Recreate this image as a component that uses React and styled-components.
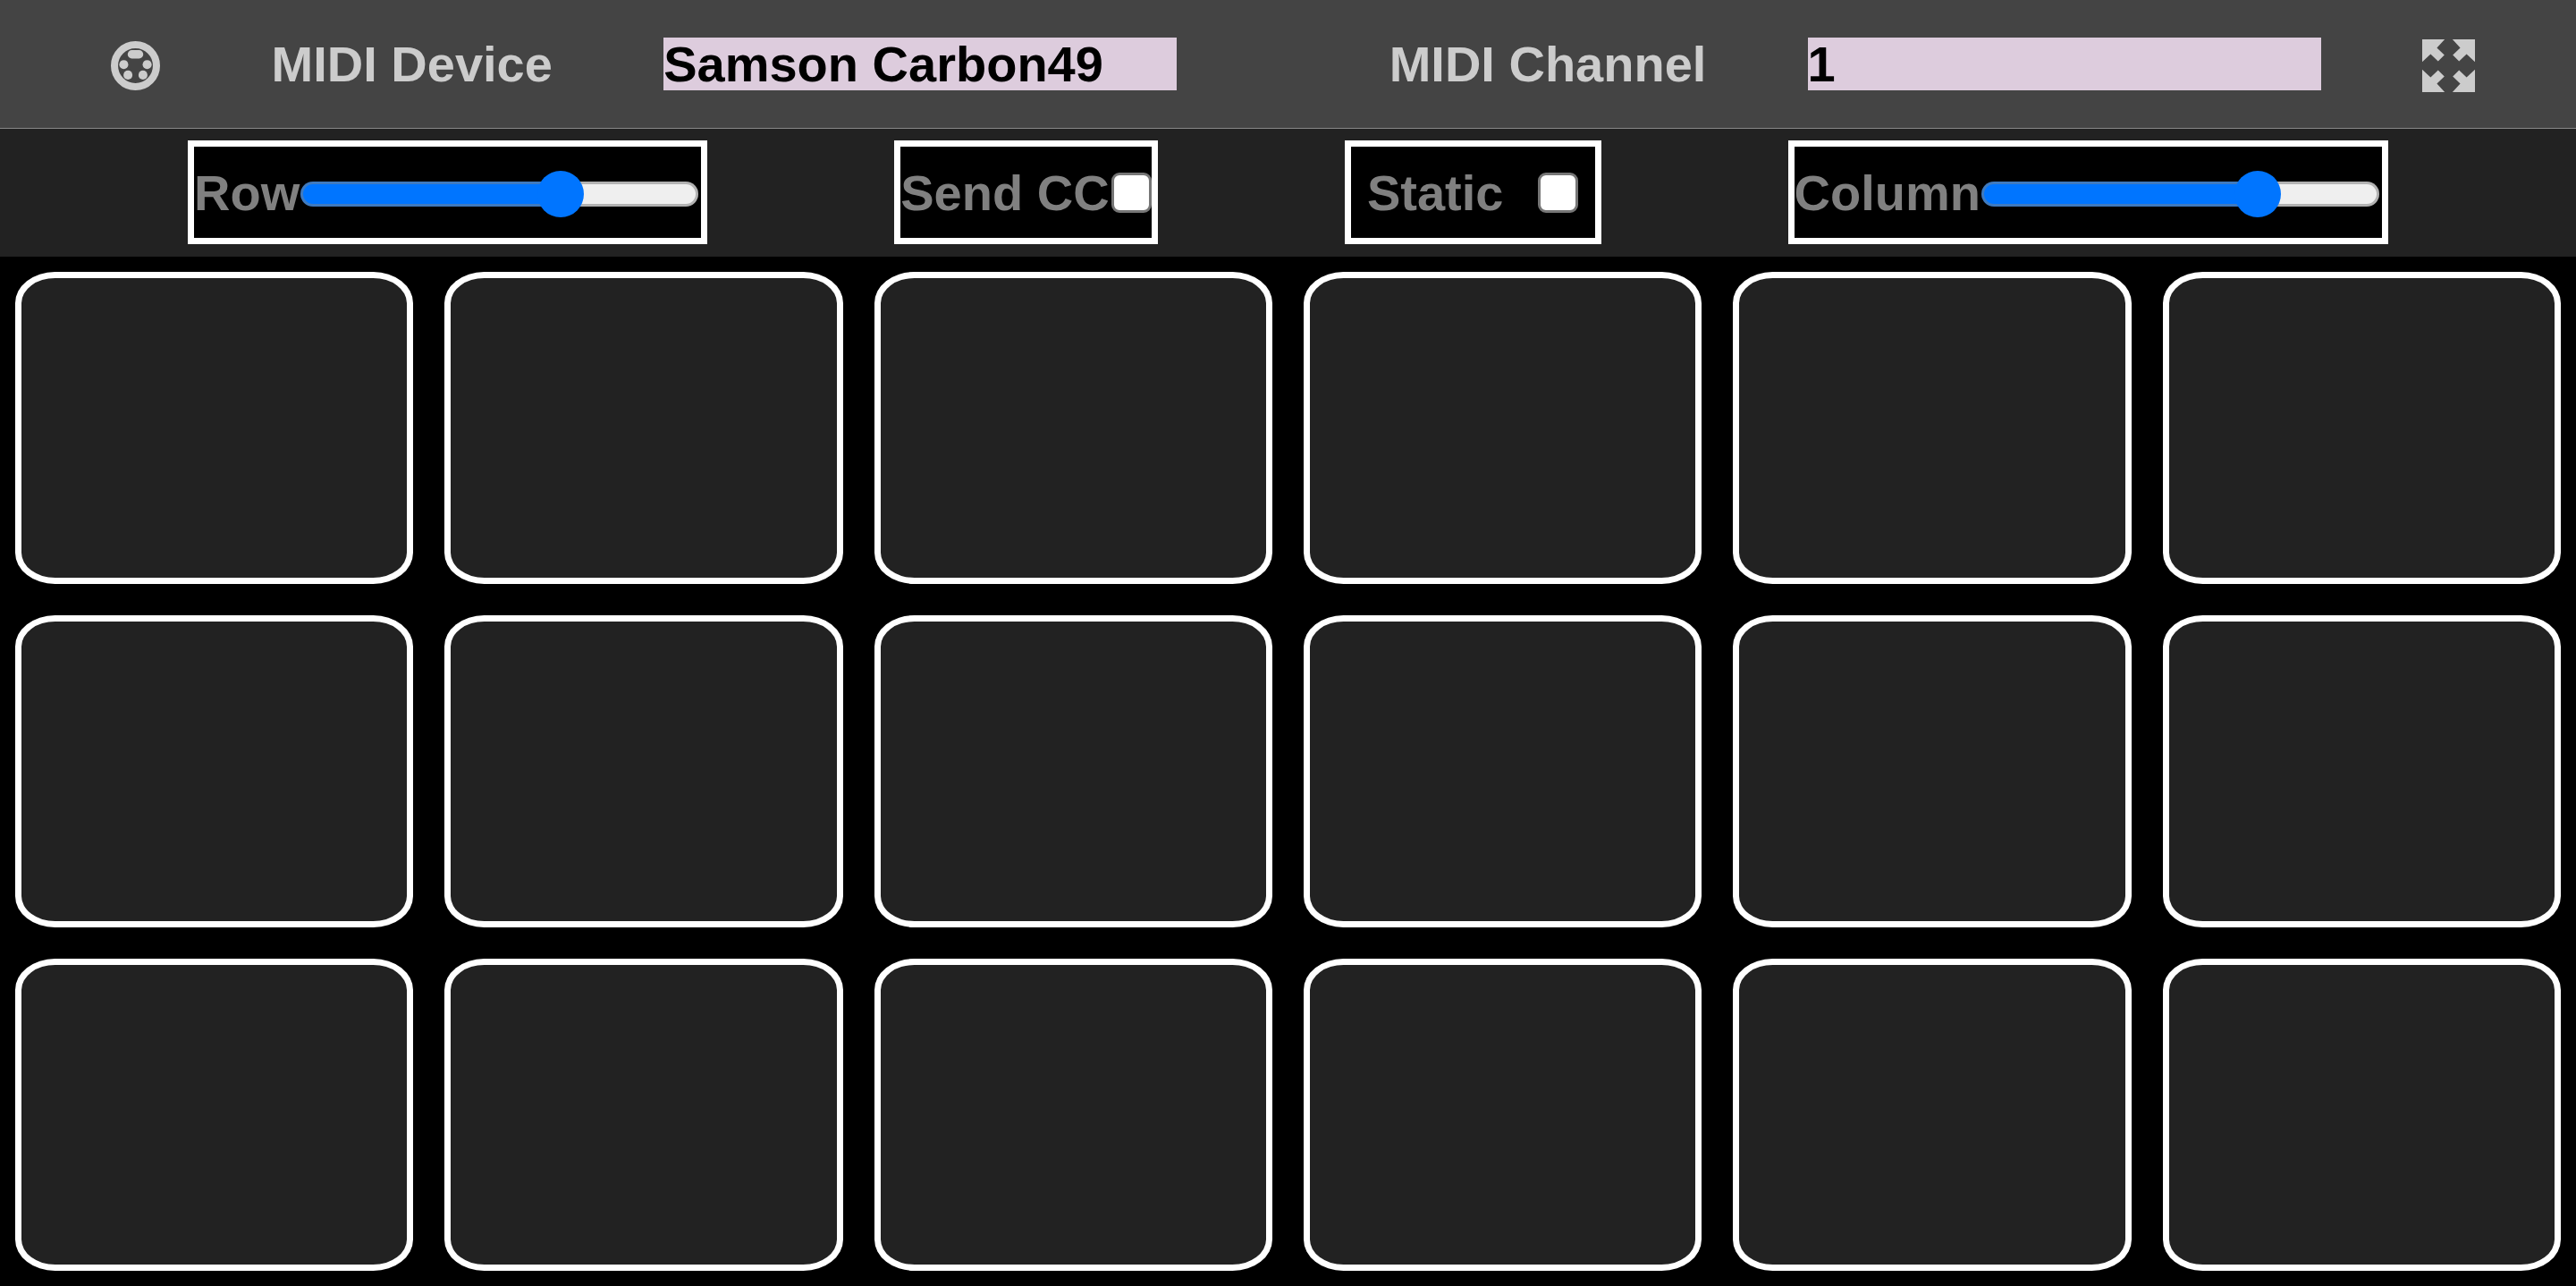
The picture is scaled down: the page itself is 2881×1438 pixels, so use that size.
import React, { useState } from "react";
import styled, { createGlobalStyle } from "styled-components";

const GlobalStyle = createGlobalStyle`
  *, *::before, *::after { box-sizing: border-box; }
  body {
    margin: 0;
    background: #000;
    font: bold 56px/59px "Liberation Sans", Arial, sans-serif;
  }
`;

const Page = styled.div`
  display: flex;
  flex-direction: column;
  min-height: 100vh;
`;

const Header = styled.header`
  display: grid;
  grid-template-columns: 1fr 1fr;
  padding: 42px 0;
  background: #444;
  border-bottom: 1px solid #888;
`;

const HeaderGroup = styled.div`
  display: flex;
  align-items: center;
  justify-content: space-evenly;
  height: 59px;
`;

const HeaderLabel = styled.label`
  color: #ccc;
  white-space: nowrap;
`;

const Select = styled.select`
  appearance: none;
  width: 574px;
  height: 59px;
  margin: 0;
  padding: 0;
  border: 0;
  border-radius: 0;
  background: #dcd;
  color: #000;
  font: inherit;
`;

const IconButton = styled.button`
  display: flex;
  margin: 4px 0 0;
  padding: 0;
  border: 0;
  background: none;
  color: #ccc;
  cursor: pointer;

  svg {
    width: ${({ $size }) => $size}px;
    height: ${({ $size }) => $size}px;
  }
`;

const Toolbar = styled.section`
  display: flex;
  justify-content: space-between;
  padding: 13px 210px 14px;
  background: #222;
`;

const Control = styled.div`
  display: flex;
  align-items: center;
  justify-content: space-around;
  width: ${({ $width }) => $width || "auto"};
  height: 116px;
  border: 7px solid #fff;
  background: #000;
  color: #808080;
  white-space: nowrap;
`;

const Checkbox = styled.input`
  appearance: none;
  width: 45px;
  height: 45px;
  margin: 0 0 0 2px;
  border: 3px solid #767676;
  border-radius: 9px;
  background: #fff;

  &:checked {
    border-color: #0075ff;
    background: #0075ff;
  }
`;

const Range = styled.input`
  appearance: none;
  width: 445px;
  height: 52px;
  margin: 4px 3px 0 1px;
  background: none;

  &::-webkit-slider-runnable-track {
    height: 28px;
    border: 3px solid transparent;
    border-radius: 14px;
    background:
      linear-gradient(to right, #0075ff var(--fill), #efefef var(--fill)) padding-box,
      linear-gradient(to right, #3f7abf var(--fill), #b2b2b2 var(--fill)) border-box;
  }

  &::-webkit-slider-thumb {
    appearance: none;
    width: 52px;
    height: 52px;
    margin: -15px -4px 0 4px;
    border-radius: 50%;
    background: #0075ff;
  }
`;

const PadGrid = styled.main`
  display: grid;
  flex: 1;
  grid-template-columns: repeat(${({ $columns }) => $columns}, 1fr);
  grid-auto-rows: 1fr;
  gap: 35px;
  padding: 17px;
`;

const Pad = styled.button`
  padding: 0;
  border: 7px solid #fff;
  border-radius: 10%;
  background: #222;

  &:active { background: #444; }
`;

const MidiIcon = () => (
  <svg viewBox="0 0 164 164" fill="currentColor" aria-hidden="true">
    <circle cx="82" cy="82" r="70" fill="none" stroke="currentColor" strokeWidth="24" />
    <rect x="56" y="30" width="52" height="28" rx="14" />
    <circle cx="43" cy="78" r="15" />
    <circle cx="121" cy="78" r="15" />
    <circle cx="57" cy="113" r="15" />
    <circle cx="107" cy="113" r="15" />
  </svg>
);

const ExpandIcon = () => (
  <svg viewBox="0 0 176 176" fill="currentColor" aria-hidden="true">
    <path d="M0 0H75L49 28L74 52L53 73L28 49L0 75Z" />
    <path d="M176 0H101L127 28L102 52L123 73L148 49L176 75Z" />
    <path d="M0 176H75L49 148L74 124L53 103L28 127L0 101Z" />
    <path d="M176 176H101L127 148L102 124L123 103L148 127L176 101Z" />
  </svg>
);

function RangeControl({ id, label, min, max, value, onChange }) {
  const fill = `${((value - min) / (max - min)) * 100}%`;
  return (
    <Control>
      <label htmlFor={id}>{label}</label>
      <Range
        id={id}
        type="range"
        min={min}
        max={max}
        value={value}
        style={{ "--fill": fill }}
        onChange={(e) => onChange(Number(e.target.value))}
      />
    </Control>
  );
}

export default function App() {
  const [rows, setRows] = useState(3);
  const [columns, setColumns] = useState(6);

  return (
    <>
      <GlobalStyle />
      <Page>
        <Header>
          <HeaderGroup>
            <IconButton type="button" aria-label="MIDI" $size={55}>
              <MidiIcon />
            </IconButton>
            <HeaderLabel htmlFor="device">MIDI Device</HeaderLabel>
            <Select id="device" defaultValue="Samson Carbon49">
              <option>Samson Carbon49</option>
            </Select>
          </HeaderGroup>
          <HeaderGroup>
            <HeaderLabel htmlFor="channel">MIDI Channel</HeaderLabel>
            <Select id="channel" defaultValue="1">
              {Array.from({ length: 16 }, (_, i) => (
                <option key={i}>{i + 1}</option>
              ))}
            </Select>
            <IconButton type="button" aria-label="Fullscreen" $size={59}>
              <ExpandIcon />
            </IconButton>
          </HeaderGroup>
        </Header>
        <Toolbar>
          <RangeControl id="rows" label="Row" min={1} max={4} value={rows} onChange={setRows} />
          <Control>
            <label htmlFor="send-cc">Send CC</label>
            <Checkbox id="send-cc" type="checkbox" />
          </Control>
          <Control $width="287px">
            <label htmlFor="static">Static</label>
            <Checkbox id="static" type="checkbox" />
          </Control>
          <RangeControl id="columns" label="Column" min={1} max={8} value={columns} onChange={setColumns} />
        </Toolbar>
        <PadGrid $columns={columns}>
          {Array.from({ length: rows * columns }, (_, i) => (
            <Pad key={i} type="button" aria-label={`Pad ${i + 1}`} />
          ))}
        </PadGrid>
      </Page>
    </>
  );
}
